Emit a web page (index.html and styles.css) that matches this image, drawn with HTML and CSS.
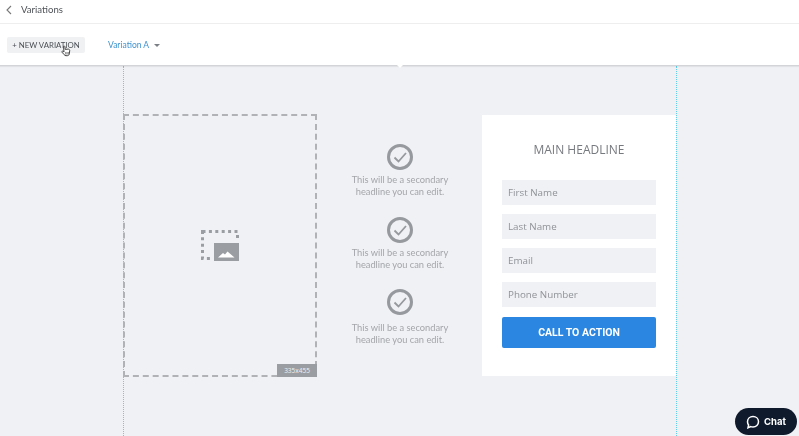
FILE: index.html
```html
<!DOCTYPE html>
<html lang="en">
<head>
	<meta charset="UTF-8">
	<title>Variations</title>
	<link rel="stylesheet" href="styles.css">
</head>
<body>
	<div class="page">
		<header class="topbar">
			<svg class="back" width="6" height="10" viewBox="0 0 6 10"><path d="M5 1 1 5l4 4" fill="none" stroke="#777" stroke-width="1.1"/></svg>
			<span class="topbar-title">Variations</span>
		</header>

		<nav class="toolbar">
			<button class="new-variation">+ NEW VARIATION</button>
			<span class="variation-select">Variation A <i class="caret"></i></span>
			<svg class="cursor" width="10" height="12" viewBox="0 0 10 12">
				<path d="M2.5 1.2c.8-.5 1.4 0 1.5.8l.2 2.4 3-.3c1 0 1.6.7 1.5 1.6l-.4 3.2c-.1 1-.9 1.8-2 1.8H5c-.8 0-1.4-.4-1.8-1L1 7.200c-.4-.8.5-1.500 1.200-.9l.8.8z" fill="#fff" stroke="#444" stroke-width="1"/>
				<path d="M4.700 7v2.500M6 7v2.500M7.300 7v2.500" stroke="#555" stroke-width=".7"/>
			</svg>
		</nav>
		<i class="notch"></i>

		<main class="canvas">
			<div class="stage">
				<div class="image-drop">
					<svg class="image-icon" width="38" height="31" viewBox="0 0 38 31">
						<rect x="1.500" y="1.500" width="35" height="27" fill="none" stroke="#9a9ea3" stroke-width="3" stroke-dasharray="3 3.400"/>
						<rect x="11" y="11" width="27" height="20" fill="#f0f1f5"/>
						<rect x="13" y="13" width="25" height="18" fill="#9a9ea3"/>
						<path d="M17 27.500l5-4.500 2 1.500 2.500-3 7 6z" fill="#fff"/>
					</svg>
					<span class="size-tag">335x455</span>
				</div>

				<div class="benefits">
					<div class="benefit">
						<svg class="check" width="26" height="26" viewBox="0 0 26 26"><circle cx="13" cy="13" r="11.500" fill="none" stroke="#96999d" stroke-width="3"/><path d="M7.500 13.500l4 4 7.500-8.500" fill="none" stroke="#96999d" stroke-width="1.800"/></svg>
						<p>This will be a secondary<br>headline you can edit.</p>
					</div>
					<div class="benefit">
						<svg class="check" width="26" height="26" viewBox="0 0 26 26"><circle cx="13" cy="13" r="11.500" fill="none" stroke="#96999d" stroke-width="3"/><path d="M7.500 13.500l4 4 7.500-8.500" fill="none" stroke="#96999d" stroke-width="1.800"/></svg>
						<p>This will be a secondary<br>headline you can edit.</p>
					</div>
					<div class="benefit benefit-last">
						<svg class="check" width="26" height="26" viewBox="0 0 26 26"><circle cx="13" cy="13" r="11.500" fill="none" stroke="#96999d" stroke-width="3"/><path d="M7.500 13.500l4 4 7.500-8.500" fill="none" stroke="#96999d" stroke-width="1.800"/></svg>
						<p>This will be a secondary<br>headline you can edit.</p>
					</div>
				</div>

				<form class="lead-form">
					<h2>MAIN HEADLINE</h2>
					<div class="field">First Name</div>
					<div class="field">Last Name</div>
					<div class="field">Email</div>
					<div class="field">Phone Number</div>
					<div class="cta">CALL TO ACTION</div>
				</form>
			</div>
		</main>

		<button class="chat">
			<svg width="14" height="14" viewBox="0 0 14 14"><path d="M7 1.500c3.200 0 5.500 2.300 5.500 5.200S10.200 12 7 12c-.8 0-1.500-.1-2.200-.4L2 12.800l.6-2.800C1.900 9.100 1.500 8 1.500 6.700 1.500 3.800 3.800 1.500 7 1.500z" fill="none" stroke="#fff" stroke-width="1.500"/></svg>
			Chat
		</button>
	</div>
</body>
</html>
```

FILE: styles.css
```css
html, body {
	margin  : 0;
	height  : 100%;
	overflow: hidden;
}

body {
	font-family: 'Open Sans', 'Liberation Sans', sans-serif;
	background : #f0f1f5;
}

.page {
	position      : relative;
	display       : flex;
	flex-direction: column;
	height        : 436px;
	filter        : blur(0.35px);
}

.topbar {
	display       : flex;
	flex          : none;
	align-items   : center;
	gap           : 9px;
	height        : 19px;
	padding       : 0 0 4px 6px;
	background    : #fff;
	border-bottom : 1px solid #eeeeee;
}

.back { flex: none; }

.topbar-title {
	font-family: Lato, sans-serif;
	font-size  : 9.600px;
	color      : #4e5257;
}

.toolbar {
	position     : relative;
	display      : flex;
	flex         : none;
	align-items  : center;
	height       : 41px;
	padding-left : 7px;
	background   : #fff;
	border-bottom: 1px solid #d3d4d7;
	box-shadow   : 0 1px 1px rgba(0, 0, 0, .06);
	z-index      : 2;
}

.new-variation {
	width        : 78px;
	height       : 16px;
	padding      : 0;
	border       : 0;
	border-radius: 2px;
	background   : #f0f1f3;
	font-family  : Lato, sans-serif;
	font-size    : 7.800px;
	color        : #4a4e53;
	white-space  : nowrap;
}

.variation-select {
	margin-left: 23px;
	font-family: Lato, sans-serif;
	font-size  : 8.500px;
	color      : #3f93cf;
}

.caret {
	display       : inline-block;
	margin-left   : 3px;
	border        : 3px solid transparent;
	border-top    : 3px solid #7a7f85;
	border-bottom : 0;
	vertical-align: middle;
}

.cursor {
	position: absolute;
	left    : 61px;
	top     : 21px;
}

.notch {
	position     : absolute;
	left         : 397px;
	top          : 65px;
	z-index      : 3;
	border       : 3px solid transparent;
	border-top   : 3px solid #fff;
	border-bottom: 0;
}

.canvas {
	display        : flex;
	flex           : 1;
	justify-content: center;
	min-height     : 0;
}

.stage {
	display              : grid;
	grid-template-columns: 193px 165px 194px;
	align-items          : start;
	width                : 552px;
	padding-top          : 48px;
	border-left          : 1px dotted #5fd0ea;
	border-right         : 1px dotted #5fd0ea;
	margin-left          : 1px;
}

.image-drop {
	position       : relative;
	display        : flex;
	align-items    : center;
	justify-content: center;
	width          : 194px;
	height         : 263px;
	margin-left    : -1px;
	border         : 2px dashed #b0b2b5;
	box-sizing     : border-box;
}

.image-icon { margin-top: -1px; }

.size-tag {
	position   : absolute;
	right      : -2px;
	bottom     : -2px;
	width      : 40px;
	height     : 13px;
	background : #9a9ea3;
	font-size  : 6.500px;
	line-height: 13px;
	text-align : center;
	color      : #f0f1f3;
}

.benefits {
	display       : flex;
	flex-direction: column;
	align-items   : center;
	padding       : 30px 0 0 1px;
	gap           : 19px;
}

.benefit {
	display       : flex;
	flex-direction: column;
	align-items   : center;
}

.benefit p {
	margin     : 4px 0 0;
	font-family: Lato, sans-serif;
	font-size  : 9.300px;
	line-height: 12px;
	text-align : center;
	color      : #a3a5a9;
}

.benefit-last { margin-top: -1px; }

.benefit-last p { margin-top: 7px; }

.lead-form {
	display       : flex;
	flex-direction: column;
	gap           : 9px;
	height        : 261px;
	box-sizing    : border-box;
	margin-top    : 1px;
	padding       : 0 20px;
	background    : #fff;
}

.lead-form h2 {
	margin     : 26px 0 13px;
	font-size  : 12px;
	font-weight: 400;
	line-height: 17px;
	text-align : center;
	color      : #76797e;
}

.field {
	height      : 25px;
	padding-left: 6px;
	background  : #f0f1f5;
	font-size   : 9.800px;
	line-height : 25px;
	color       : #8f9297;
}

.cta {
	height       : 31px;
	margin-top   : 1px;
	border-radius: 2px;
	background   : #2a86e0;
	font-family  : Roboto, sans-serif;
	font-size    : 10.500px;
	font-weight  : 700;
	line-height  : 31px;
	text-align   : center;
	color        : #fff;
}

.chat {
	position     : absolute;
	right        : 2px;
	bottom       : 1px;
	display      : flex;
	align-items  : center;
	gap          : 4px;
	width        : 62px;
	height       : 27px;
	padding      : 0 0 0 11px;
	border       : 0;
	border-radius: 14px;
	background   : #0f1b2d;
	font-family  : Inter, sans-serif;
	font-size    : 9.500px;
	font-weight  : 700;
	color        : #fff;
}
```
